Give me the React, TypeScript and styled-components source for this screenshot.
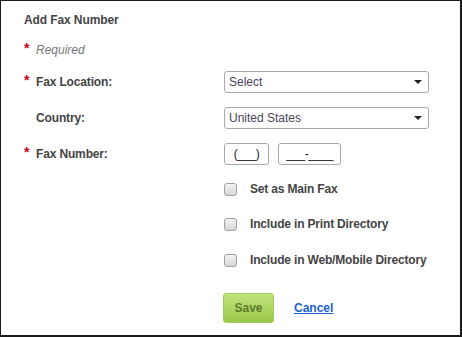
import { createGlobalStyle, styled } from 'styled-components';

const GlobalStyle = createGlobalStyle`
  html, body {
    margin: 0;
    padding: 0;
    background: #fff;
  }
  body {
    font-family: "Liberation Sans", Arial, sans-serif;
  }
`;

const Panel = styled.div`
  box-sizing: border-box;
  width: 462px;
  height: 337px;
  border: 1px solid #1a1a1a;
  border-right-width: 2px;
  border-bottom-width: 2px;
  padding: 9px 0 0 23px;
  color: #444;
  font-size: 12px;
`;

const Title = styled.div`
  font-weight: bold;
  height: 20px;
  line-height: 20px;
  letter-spacing: -0.1px;
`;

const RequiredNote = styled.div`
  display: flex;
  align-items: center;
  height: 20px;
  margin-top: 10px;
  font-style: italic;
  color: #777;
`;

const Star = styled.span<{ $hidden?: boolean }>`
  display: inline-block;
  width: 12px;
  color: #d0021b;
  font-weight: bold;
  font-style: normal;
  font-size: 14px;
  position: relative;
  top: -2px;
  visibility: ${({ $hidden }) => ($hidden ? 'hidden' : 'visible')};
`;

const FormGrid = styled.div`
  display: grid;
  grid-template-columns: 200px 1fr;
  grid-template-rows: 36px 36px 36px 34px 36px 36px;
  align-items: center;
  margin-top: 4px;
`;

const Label = styled.div`
  display: flex;
  align-items: center;
  font-weight: bold;
  color: #444;
  letter-spacing: -0.15px;
`;

const SelectBox = styled.div`
  box-sizing: border-box;
  width: 205px;
  height: 22px;
  border: 1px solid #a9a9a9;
  border-radius: 3px;
  display: flex;
  align-items: center;
  justify-content: space-between;
  padding: 0 6px 0 4px;
  color: #4a4458;
  background: #fff;
`;

const Caret = styled.span`
  width: 0;
  height: 0;
  border-left: 4px solid transparent;
  border-right: 4px solid transparent;
  border-top: 4px solid #222;
`;

const PhoneFields = styled.div`
  display: flex;
  gap: 9px;
`;

const PhoneInput = styled.div<{ $width: number }>`
  box-sizing: border-box;
  width: ${({ $width }) => $width}px;
  height: 22px;
  border: 1px solid #a9a9a9;
  border-radius: 3px;
  display: flex;
  align-items: center;
  justify-content: center;
  color: #222;
  letter-spacing: -0.5px;
`;

const CheckRow = styled.label`
  grid-column: 2;
  display: flex;
  align-items: center;
  gap: 13px;
  font-weight: bold;
  color: #444;
  letter-spacing: -0.17px;
`;

const CheckBox = styled.span`
  box-sizing: border-box;
  width: 13px;
  height: 13px;
  border: 1px solid #a0a0a0;
  border-radius: 3px;
  background: linear-gradient(#f4f4f4, #d6d6d6);
`;

const Actions = styled.div`
  display: flex;
  align-items: center;
  gap: 20px;
  margin: 15px 0 0 199px;
`;

const SaveButton = styled.button`
  box-sizing: border-box;
  width: 51px;
  height: 30px;
  border: 1px solid #a3cc5c;
  border-radius: 3px;
  background: linear-gradient(#c2e27c, #98c94a);
  color: #5b7a2c;
  font-family: inherit;
  font-weight: bold;
  font-size: 12px;
  cursor: pointer;
`;

const CancelLink = styled.a`
  color: #1a62d6;
  font-weight: bold;
  text-decoration: underline;
  cursor: pointer;
`;

const options = ['Set as Main Fax', 'Include in Print Directory', 'Include in Web/Mobile Directory'];

function App(): JSX.Element {
  return (
    <>
      <GlobalStyle />
      <Panel>
        <Title>Add Fax Number</Title>
        <RequiredNote>
          <Star>*</Star>Required
        </RequiredNote>
        <FormGrid>
          <Label>
            <Star>*</Star>Fax Location:
          </Label>
          <SelectBox>
            Select
            <Caret />
          </SelectBox>

          <Label>
            <Star $hidden>*</Star>Country:
          </Label>
          <SelectBox>
            United States
            <Caret />
          </SelectBox>

          <Label>
            <Star>*</Star>Fax Number:
          </Label>
          <PhoneFields>
            <PhoneInput $width={45}>(___)</PhoneInput>
            <PhoneInput $width={63}>___-____</PhoneInput>
          </PhoneFields>

          {options.map( ( text ) => (
            <CheckRow key={text}>
              <CheckBox />
              {text}
            </CheckRow>
          ) )}
        </FormGrid>
        <Actions>
          <SaveButton>Save</SaveButton>
          <CancelLink>Cancel</CancelLink>
        </Actions>
      </Panel>
    </>
  );
}

export default App;
